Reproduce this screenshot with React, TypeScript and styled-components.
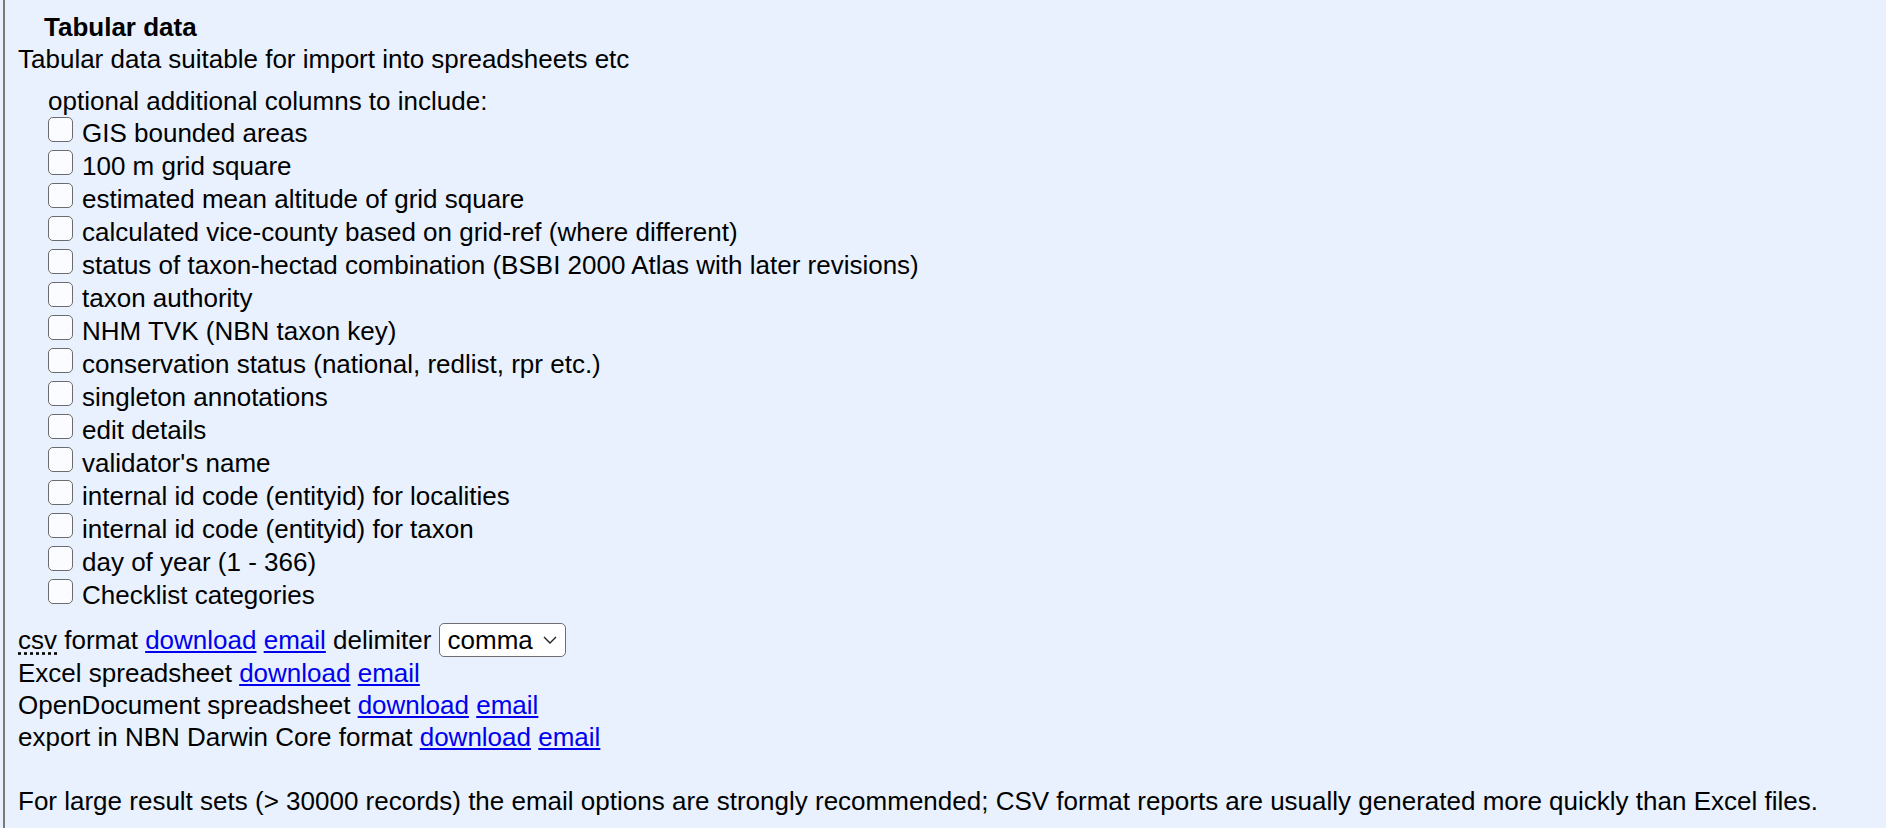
import React from "react";
import styled, { createGlobalStyle } from "styled-components";

const Global = createGlobalStyle`
  html, body {
    margin: 0;
    padding: 0;
    background: #e8f1fd;
  }
  body {
    font-family: "Liberation Sans", Arial, Helvetica, sans-serif;
    font-size: 26px;
    color: #000;
  }
`;

const Panel = styled.div`
  margin-left: 3px;
  border-left: 2px solid #7a7a7a;
  padding: 11px 0 11px 13px;
  min-height: 828px;
  box-sizing: border-box;
`;

const Heading = styled.div`
  font-weight: bold;
  line-height: 32px;
  padding-left: 26px;
`;

const Line = styled.div`
  line-height: 32px;
  white-space: nowrap;
`;

const Options = styled.div`
  margin-top: 10px;
  padding-left: 30px;
`;

const OptionRow = styled.label`
  display: flex;
  align-items: flex-start;
  line-height: 33px;
  height: 33px;
`;

const Check = styled.input.attrs({ type: "checkbox" })`
  appearance: none;
  -webkit-appearance: none;
  width: 25px;
  height: 25px;
  margin: 0 9px 0 0;
  border: 1.8px solid #6c6c6c;
  border-radius: 5px;
  background: #fbfcff;
  box-sizing: border-box;
  flex: none;
`;

const Formats = styled.div`
  margin-top: 11px;
`;

const CsvLine = styled.div`
  line-height: 34px;
  height: 34px;
  white-space: nowrap;
`;

const Abbr = styled.abbr`
  text-decoration: underline dotted;
  text-underline-offset: 3px;
  cursor: help;
`;

const Link = styled.a`
  color: #0000ee;
  text-decoration: underline;
`;

const SelectWrap = styled.span`
  position: relative;
  display: inline-block;
  vertical-align: top;
  height: 34px;
`;

const Select = styled.select`
  appearance: none;
  -webkit-appearance: none;
  font-family: inherit;
  font-size: 26px;
  color: #000;
  width: 127px;
  height: 34px;
  padding: 0 30px 0 8px;
  border: 1.5px solid #6e6e6e;
  border-radius: 5px;
  background: #fff;
  box-sizing: border-box;
  line-height: 30px;
  display: block;
`;

const Chevron = styled.svg`
  position: absolute;
  right: 9px;
  top: 13px;
  pointer-events: none;
`;

const Note = styled.div`
  margin-top: 32px;
  line-height: 32px;
  white-space: nowrap;
`;

const options = [
  "GIS bounded areas",
  "100 m grid square",
  "estimated mean altitude of grid square",
  "calculated vice-county based on grid-ref (where different)",
  "status of taxon-hectad combination (BSBI 2000 Atlas with later revisions)",
  "taxon authority",
  "NHM TVK (NBN taxon key)",
  "conservation status (national, redlist, rpr etc.)",
  "singleton annotations",
  "edit details",
  "validator's name",
  "internal id code (entityid) for localities",
  "internal id code (entityid) for taxon",
  "day of year (1 - 366)",
  "Checklist categories",
];

const DlLinks = () => (
  <>
    <Link href="#">download</Link> <Link href="#">email</Link>
  </>
);

export default function App() {
  return (
    <>
      <Global />
      <Panel>
        <Heading>Tabular data</Heading>
        <Line>Tabular data suitable for import into spreadsheets etc</Line>
        <Options>
          <Line>optional additional columns to include:</Line>
          {options.map((o) => (
            <OptionRow key={o}>
              <Check />
              <span>{o}</span>
            </OptionRow>
          ))}
        </Options>
        <Formats>
          <CsvLine>
            <Abbr title="comma separated values">csv</Abbr> format <DlLinks /> delimiter{" "}
            <SelectWrap>
              <Select defaultValue="comma">
                <option value="comma">comma</option>
                <option value="tab">tab</option>
              </Select>
              <Chevron width="14" height="8" viewBox="0 0 14 8">
                <path d="M1 1 L7 7 L13 1" fill="none" stroke="#222" strokeWidth="1.4" />
              </Chevron>
            </SelectWrap>
          </CsvLine>
          <Line>
            Excel spreadsheet <DlLinks />
          </Line>
          <Line>
            OpenDocument spreadsheet <DlLinks />
          </Line>
          <Line>
            export in NBN Darwin Core format <DlLinks />
          </Line>
        </Formats>
        <Note>
          For large result sets (&gt; 30000 records) the email options are strongly recommended; CSV format
          reports are usually generated more quickly than Excel files.
        </Note>
      </Panel>
    </>
  );
}
